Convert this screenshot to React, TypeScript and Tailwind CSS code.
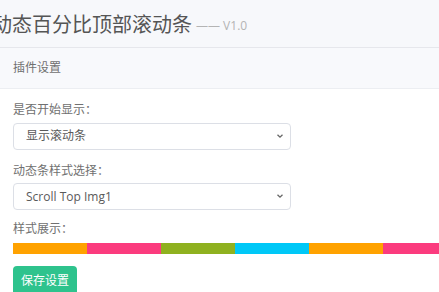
import { useState } from 'react';

const COLORS = ['bg-[#ffa200]', 'bg-[#fb3b7e]', 'bg-[#8fb11f]', 'bg-[#00c8f7]'];

function Chevron() {
  return (
    <svg
      width="8"
      height="6"
      viewBox="0 0 8 6"
      className="pointer-events-none absolute right-[7px] top-1/2 -translate-y-1/2"
    >
      <path d="M1.5 1.8 L4 4.2 L6.5 1.8" fill="none" stroke="#666" strokeWidth="1.3" />
    </svg>
  );
}

function SelectField({
  label,
  value,
  options,
  onChange,
}: {
  label: string;
  value: string;
  options: string[];
  onChange: (v: string) => void;
}) {
  return (
    <div>
      <div className="text-[12px] leading-[18px] text-[#707070] mb-[3px]">{label}</div>
      <div className="relative w-[278px]">
        <select
          value={value}
          onChange={(e) => onChange(e.target.value)}
          className="appearance-none w-full h-[27px] rounded-[4px] border border-[#dcdfe6] bg-white pl-[12px] pr-[20px] text-[12px] text-[#5a5a5a] outline-none"
        >
          {options.map((o) => (
            <option key={o}>{o}</option>
          ))}
        </select>
        <Chevron />
      </div>
    </div>
  );
}

export default function App() {
  const [show, setShow] = useState('显示滚动条');
  const [style, setStyle] = useState('Scroll Top Img1');

  // 6 segments, 74px each, repeating the palette
  const segments = Array.from({ length: 6 }, (_, i) => COLORS[i % COLORS.length]);

  return (
    <div
      className="min-h-screen bg-[#f7f8fb] overflow-hidden"
      style={{ fontFamily: '"Open Sans", "Noto Sans CJK SC", sans-serif' }}
    >
      <div className="h-[47px] flex items-center -ml-[8px]">
        <span className="text-[20px] text-[#555] leading-none" style={{ fontFamily: '"Noto Sans CJK SC", sans-serif' }}>
          动态百分比顶部滚动条
        </span>
        <span className="ml-[4px] mt-[5px] text-[12px] text-[#b4b4b4]">—— V1.0</span>
      </div>

      <div className="border-t border-[#e6e7ec]">
        <div className="h-[40px] flex items-center px-[13px] text-[12px] text-[#707070] bg-[#f8f9fc]">
          插件设置
        </div>
        <div className="bg-white border-t border-[#eceef2] pl-[13px] pt-[12px] pb-[20px] min-h-[220px]">
          <SelectField
            label="是否开始显示："
            value={show}
            options={['显示滚动条', '隐藏滚动条']}
            onChange={setShow}
          />
          <div className="mt-[12px]">
            <SelectField
              label="动态条样式选择："
              value={style}
              options={['Scroll Top Img1', 'Scroll Top Img2', 'Scroll Top Img3']}
              onChange={setStyle}
            />
          </div>

          <div className="mt-[10px] text-[12px] leading-[18px] text-[#707070]">样式展示：</div>
          <div className="mt-[5px] flex h-[11px] w-[480px]">
            {segments.map((c, i) => (
              <div key={i} className={`${c} w-[74px] shrink-0`} />
            ))}
          </div>

          <button className="mt-[12px] h-[30px] px-[8px] rounded-[4px] bg-[#2ec38d] text-white text-[12px]">
            保存设置
          </button>
        </div>
      </div>
    </div>
  );
}
